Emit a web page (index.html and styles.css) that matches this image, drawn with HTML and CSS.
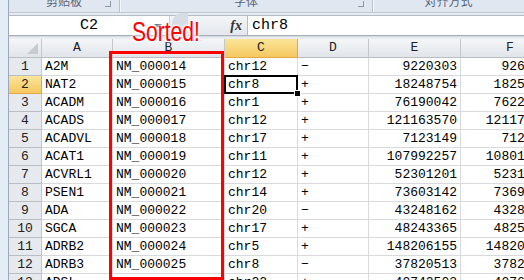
FILE: index.html
```html
<!DOCTYPE html>
<html lang="zh">
<head>
    <meta charset="UTF-8">
    <title>Sorted</title>
    <link rel="stylesheet" href="styles.css">
</head>
<body>
<div class="window">
    <div class="ribbon">
        <div class="group g-clip"><span class="glabel">剪贴板</span><span class="launcher"></span></div>
        <div class="group g-font"><span class="glabel">字体</span><span class="launcher"></span></div>
        <div class="group g-align"><span class="glabel">对齐方式</span></div>
    </div>

    <div class="formula-bar">
        <div class="name-box">C2<span class="nb-arrow"></span></div>
        <div class="fx-area"><span class="bump"></span><span class="fx">fx</span></div>
        <div class="formula-input">chr8</div>
    </div>

    <div class="sheet">
        <div class="hd corner"></div>
        <div class="hd">A</div><div class="hd">B</div><div class="hd active">C</div><div class="hd">D</div><div class="hd">E</div><div class="hd">F</div>

        <div class="rh">1</div><div class="c">A2M</div><div class="c">NM_000014</div><div class="c">chr12</div><div class="c">−</div><div class="c num">9220303</div><div class="c num">9268558</div>
        <div class="rh active">2</div><div class="c">NAT2</div><div class="c">NM_000015</div><div class="c sel">chr8</div><div class="c">+</div><div class="c num">18248754</div><div class="c num">18258723</div>
        <div class="rh">3</div><div class="c">ACADM</div><div class="c">NM_000016</div><div class="c">chr1</div><div class="c">+</div><div class="c num">76190042</div><div class="c num">76228448</div>
        <div class="rh">4</div><div class="c">ACADS</div><div class="c">NM_000017</div><div class="c">chr12</div><div class="c">+</div><div class="c num">121163570</div><div class="c num">121177811</div>
        <div class="rh">5</div><div class="c">ACADVL</div><div class="c">NM_000018</div><div class="c">chr17</div><div class="c">+</div><div class="c num">7123149</div><div class="c num">7128586</div>
        <div class="rh">6</div><div class="c">ACAT1</div><div class="c">NM_000019</div><div class="c">chr11</div><div class="c">+</div><div class="c num">107992257</div><div class="c num">108018503</div>
        <div class="rh">7</div><div class="c">ACVRL1</div><div class="c">NM_000020</div><div class="c">chr12</div><div class="c">+</div><div class="c num">52301201</div><div class="c num">52317145</div>
        <div class="rh">8</div><div class="c">PSEN1</div><div class="c">NM_000021</div><div class="c">chr14</div><div class="c">+</div><div class="c num">73603142</div><div class="c num">73690799</div>
        <div class="rh">9</div><div class="c">ADA</div><div class="c">NM_000022</div><div class="c">chr20</div><div class="c">−</div><div class="c num">43248162</div><div class="c num">43280376</div>
        <div class="rh">10</div><div class="c">SGCA</div><div class="c">NM_000023</div><div class="c">chr17</div><div class="c">+</div><div class="c num">48243365</div><div class="c num">48253346</div>
        <div class="rh">11</div><div class="c">ADRB2</div><div class="c">NM_000024</div><div class="c">chr5</div><div class="c">+</div><div class="c num">148206155</div><div class="c num">148208183</div>
        <div class="rh">12</div><div class="c">ADRB3</div><div class="c">NM_000025</div><div class="c">chr8</div><div class="c">−</div><div class="c num">37820513</div><div class="c num">37824472</div>
        <div class="rh">13</div><div class="c">ADSL</div><div class="c">NM_000026</div><div class="c">chr22</div><div class="c">+</div><div class="c num">40742503</div><div class="c num">40763087</div>
    </div>

    <div class="sort-box"></div>
    <div class="sorted-label">Sorted!</div>
</div>
</body>
</html>
```

FILE: styles.css
```css
html,
body {
    margin: 0;
    padding: 0;
}

body {
    width: 524px;
    height: 280px;
    overflow: hidden;
    background: linear-gradient(to right, #e4ecf6, #c3d2e4);
    font-family: "Liberation Mono", monospace;
}

.window {
    position: relative;
    margin-left: 8px;
    height: 280px;
    background: #e8ebf0;
    border-left: 1px solid #9aa8ba;
    box-sizing: border-box;
}

/* ribbon, only the bottom of the group labels shows */
.ribbon {
    display: flex;
    height: 12px;
    overflow: hidden;
    background: #e1e7f0;
    border-bottom: 1px solid #c0c8d3;
    font-family: "Noto Sans CJK SC", sans-serif;
    font-size: 12px;
    color: #56657a;
}

.group {
    position: relative;
    text-align: center;
    border-right: 1px solid #b7c1ce;
    box-shadow: 1px 0 0 #f6f8fb;
}

.g-clip { width: 110px; }
.g-font { width: 252px; }
.g-align { flex: 1; border-right: 0; box-shadow: none; }

.glabel {
    display: block;
    line-height: 12px;
    margin-top: -5px;
}

.launcher {
    position: absolute;
    right: 8px;
    top: 1px;
    width: 5px;
    height: 5px;
    border-right: 1px solid #8c98a8;
    border-bottom: 1px solid #8c98a8;
}

/* formula bar */
.formula-bar {
    display: flex;
    height: 19px;
    margin: 2px 0 3px;
    background: #fff;
    border-top: 1px solid #b5bcc6;
    border-bottom: 1px solid #a9b0ba;
    box-shadow: 0 1px 0 #d5dae1;
}

.name-box {
    position: relative;
    width: 160px;
    text-align: center;
    font-size: 15px;
    line-height: 19px;
}

.nb-arrow {
    position: absolute;
    right: 7px;
    top: 8px;
    border-left: 4px solid transparent;
    border-right: 4px solid transparent;
    border-top: 4px solid #6d7580;
}

.fx-area {
    position: relative;
    width: 77px;
    background: linear-gradient(#f3f5f8, #e4e8ee);
    border-left: 1px solid #c5ccd5;
    border-right: 1px solid #b5bcc6;
}

.bump {
    position: absolute;
    left: 2px;
    top: -3px;
    width: 16px;
    height: 24px;
    border-radius: 10px 0 0 10px;
    background: #d7dde5;
}

.fx {
    position: absolute;
    right: 5px;
    top: 0;
    font-family: "Liberation Serif", serif;
    font-style: italic;
    font-weight: bold;
    font-size: 14px;
    line-height: 19px;
    color: #333;
}

.formula-input {
    flex: 1;
    padding-left: 4px;
    font-size: 15px;
    line-height: 19px;
}

/* grid */
.sheet {
    display: grid;
    grid-template-columns: 33px 71px 112px 73px 71px 92px 99px;
    grid-template-rows: 19px repeat(13, 18px);
    background: #fff;
    font-size: 13px;
}

.hd,
.rh {
    background: linear-gradient(#f4f6f8, #e1e5ea);
    border-right: 1px solid #c2c7ce;
    border-bottom: 1px solid #b9bec5;
    text-align: center;
    color: #222;
    line-height: 18px;
    white-space: nowrap;
}

.rh {
    background: #e6e9ee;
    line-height: 17px;
}

.hd.active,
.rh.active {
    background: linear-gradient(#fbe59a, #f5c75f);
    border-right-color: #e3a847;
    border-bottom-color: #e3a847;
}

.corner {
    position: relative;
}

.corner::after {
    content: "";
    position: absolute;
    right: 3px;
    bottom: 3px;
    border-left: 11px solid transparent;
    border-bottom: 11px solid #c7ccd3;
}

.c {
    padding: 0 3px;
    line-height: 18px;
    border-right: 1px solid #d8dadd;
    border-bottom: 1px solid #d8dadd;
    white-space: nowrap;
    overflow: hidden;
    color: #000;
}

.num {
    text-align: right;
    padding-right: 3px;
}

.sel {
    position: relative;
    overflow: visible;
}

.sel::before {
    content: "";
    position: absolute;
    left: -1px;
    top: -1px;
    right: -1px;
    bottom: -1px;
    border: 2px solid #000;
}

.sel::after {
    content: "";
    position: absolute;
    right: -4px;
    bottom: -4px;
    width: 5px;
    height: 5px;
    background: #000;
    border: 1px solid #fff;
}

/* annotations on top */
.sort-box {
    position: absolute;
    left: 100px;
    top: 51px;
    width: 115px;
    height: 229px;
    border: 3px solid #f00;
    box-sizing: border-box;
}

.sorted-label {
    position: absolute;
    left: 123px;
    top: 17px;
    font-family: "Liberation Sans", sans-serif;
    font-size: 27px;
    line-height: 30px;
    color: #f00;
    transform: scaleX(0.78);
    transform-origin: left center;
    text-shadow: 0 0 2px #fff, 0 0 3px #fff, 0 0 4px #fff, 0 0 4px #fff;
}
```
